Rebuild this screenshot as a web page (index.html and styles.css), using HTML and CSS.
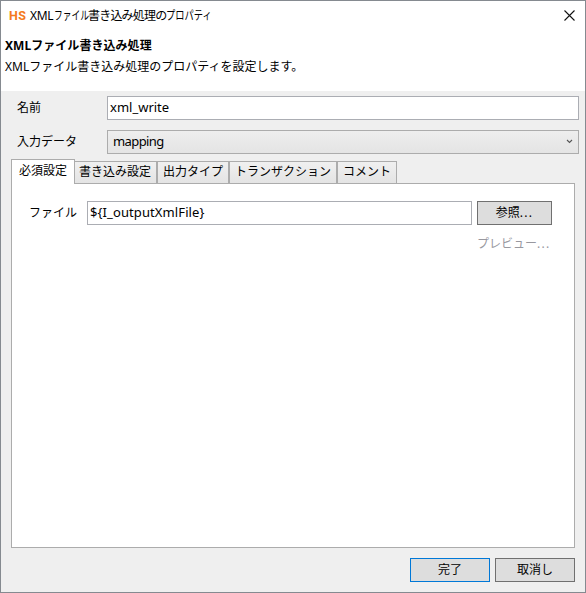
FILE: index.html
```html
<!DOCTYPE html>
<html lang="ja">
<head>
<meta charset="utf-8">
<title>XMLファイル書き込み処理のプロパティ</title>
<link rel="stylesheet" href="styles.css">
</head>
<body>
<div class="window">
  <header class="banner">
    <div class="titlebar">
      <span class="logo">HS</span>
      <span class="caption"><span class="caption-latin">XML</span><span class="caption-kana caption-file">ファイル</span><span class="caption-kanji">書き込み処理の</span><span class="caption-kana">プロパティ</span></span>
      <svg class="close" width="11" height="11" viewBox="0 0 11 11"><path d="M.5 .5l10 10M10.5 .5l-10 10"/></svg>
    </div>
    <h1 class="heading">XMLファイル書き込み処理</h1>
    <p class="description">XMLファイル書き込み処理のプロパティを設定します。</p>
  </header>
  <main class="form">
    <div class="row"><span class="label">名前</span><div class="field">xml_write</div></div>
    <div class="row"><span class="label">入力データ</span><div class="field combo"><span class="choice">mapping</span><svg width="7" height="5" viewBox="0 0 7 5"><path d="M1 1l2.5 2.5L6 1"/></svg></div></div>
  </main>
  <nav class="tabs">
    <div class="tab active">必須設定</div>
    <div class="tab tab-write">書き込み設定</div>
    <div class="tab tab-type">出力タイプ</div>
    <div class="tab tab-transaction">トランザクション</div>
    <div class="tab tab-comment">コメント</div>
  </nav>
  <section class="panel">
    <div class="file-row">
      <span class="file-label">ファイル</span>
      <div class="field path">${I_outputXmlFile}</div>
      <div class="button browse">参照<span class="dots">...</span></div>
    </div>
    <div class="preview">プレビュー<span class="dots">...</span></div>
  </section>
  <footer class="actions">
    <div class="button primary">完了</div>
    <div class="button">取消し</div>
  </footer>
</div>
</body>
</html>
```
FILE: styles.css
```css
* { box-sizing: border-box; }
body {
  margin: 0;
  font: 12px/16px "Noto Sans", "Noto Sans CJK JP", sans-serif;
  color: #000;
}
.window {
  width: 586px;
  height: 593px;
  border: 1px solid #858a90;
  background: #efefef;
  display: flex;
  flex-direction: column;
  overflow: hidden;
}
.banner { height: 90px; background: #fff; padding-left: 4px; }
.titlebar {
  height: 29px;
  display: flex;
  align-items: center;
  padding: 0 10px 0 4px;
}
.logo {
  width: 21px;
  font: bold 12.5px/16px Roboto, sans-serif;
  letter-spacing: 0.3px;
  color: #f47a20;
}
.caption { display: flex; flex: 1; white-space: nowrap; }
.caption-latin { width: 24px; letter-spacing: -0.3px; }
.caption-kana {
  width: 45px;
  transform: scaleX(0.77);
  transform-origin: left;
}
.caption-file { width: 34px; transform: scaleX(0.73); }
.caption-kanji { width: 78px; letter-spacing: -0.8px; }
.close { fill: none; stroke: #111; stroke-width: 1.1; }
.heading { margin: 8px 0 0; font-size: 12px; line-height: 16px; height: 16px; letter-spacing: 0.05px; }
.description { margin: 5px 0 0; height: 16px; }
.form {
  height: 68px;
  padding: 5px 6px 0 16px;
  display: flex;
  flex-direction: column;
  gap: 10px;
}
.row { display: flex; align-items: center; height: 24px; }
.label { width: 90px; }
.field {
  flex: 1;
  height: 24px;
  border: 1px solid #abadb3;
  background: #fff;
  padding: 0 2px;
  line-height: 21px;
  font-size: 13px;
  white-space: nowrap;
}
.combo {
  display: flex;
  justify-content: space-between;
  align-items: center;
  padding: 0 5px;
  border-color: #acacac;
  background: linear-gradient(#eee, #e4e4e4);
}
.choice { padding-bottom: 2px; letter-spacing: -0.6px; }
.combo svg { fill: none; stroke: #555; stroke-width: 1.1; margin-bottom: 2px; }
.tabs {
  display: flex;
  align-items: flex-end;
  height: 25px;
  margin-left: 10px;
  position: relative;
}
.tab {
  height: 23px;
  border: 1px solid #acacac;
  background: linear-gradient(#f0f0f0, #e4e4e4);
  line-height: 20px;
  padding-left: 5px;
  white-space: nowrap;
}
.active {
  width: 64px;
  height: 25px;
  padding-left: 7px;
  line-height: 22px;
  background: #fff;
  border-bottom: 0;
}
.tab-write { width: 82px; padding-left: 4px; border-left: 0; }
.tab-type { width: 72px; }
.tab-transaction { width: 108px; }
.tab-comment { width: 60px; }
.panel {
  width: 564px;
  height: 365px;
  margin: -1px 0 0 10px;
  border: 1px solid #acacac;
  background: #fff;
  padding-top: 17px;
}
.file-row { display: flex; align-items: center; padding-left: 17px; }
.file-label { width: 58px; }
.path { flex: 0 0 385px; letter-spacing: 0.1px; }
.button {
  width: 80px;
  height: 24px;
  border: 1px solid #707070;
  background: #ddd;
  text-align: center;
  line-height: 21px;
}
.browse { width: 75px; margin-left: 5px; }
.dots { letter-spacing: 1.3px; }
.preview { margin: 11px 0 0 465px; color: #98989f; }
.actions {
  display: flex;
  justify-content: flex-end;
  gap: 5px;
  padding: 10px 10px 0 0;
}
.primary { border-color: #0078d7; }
```
